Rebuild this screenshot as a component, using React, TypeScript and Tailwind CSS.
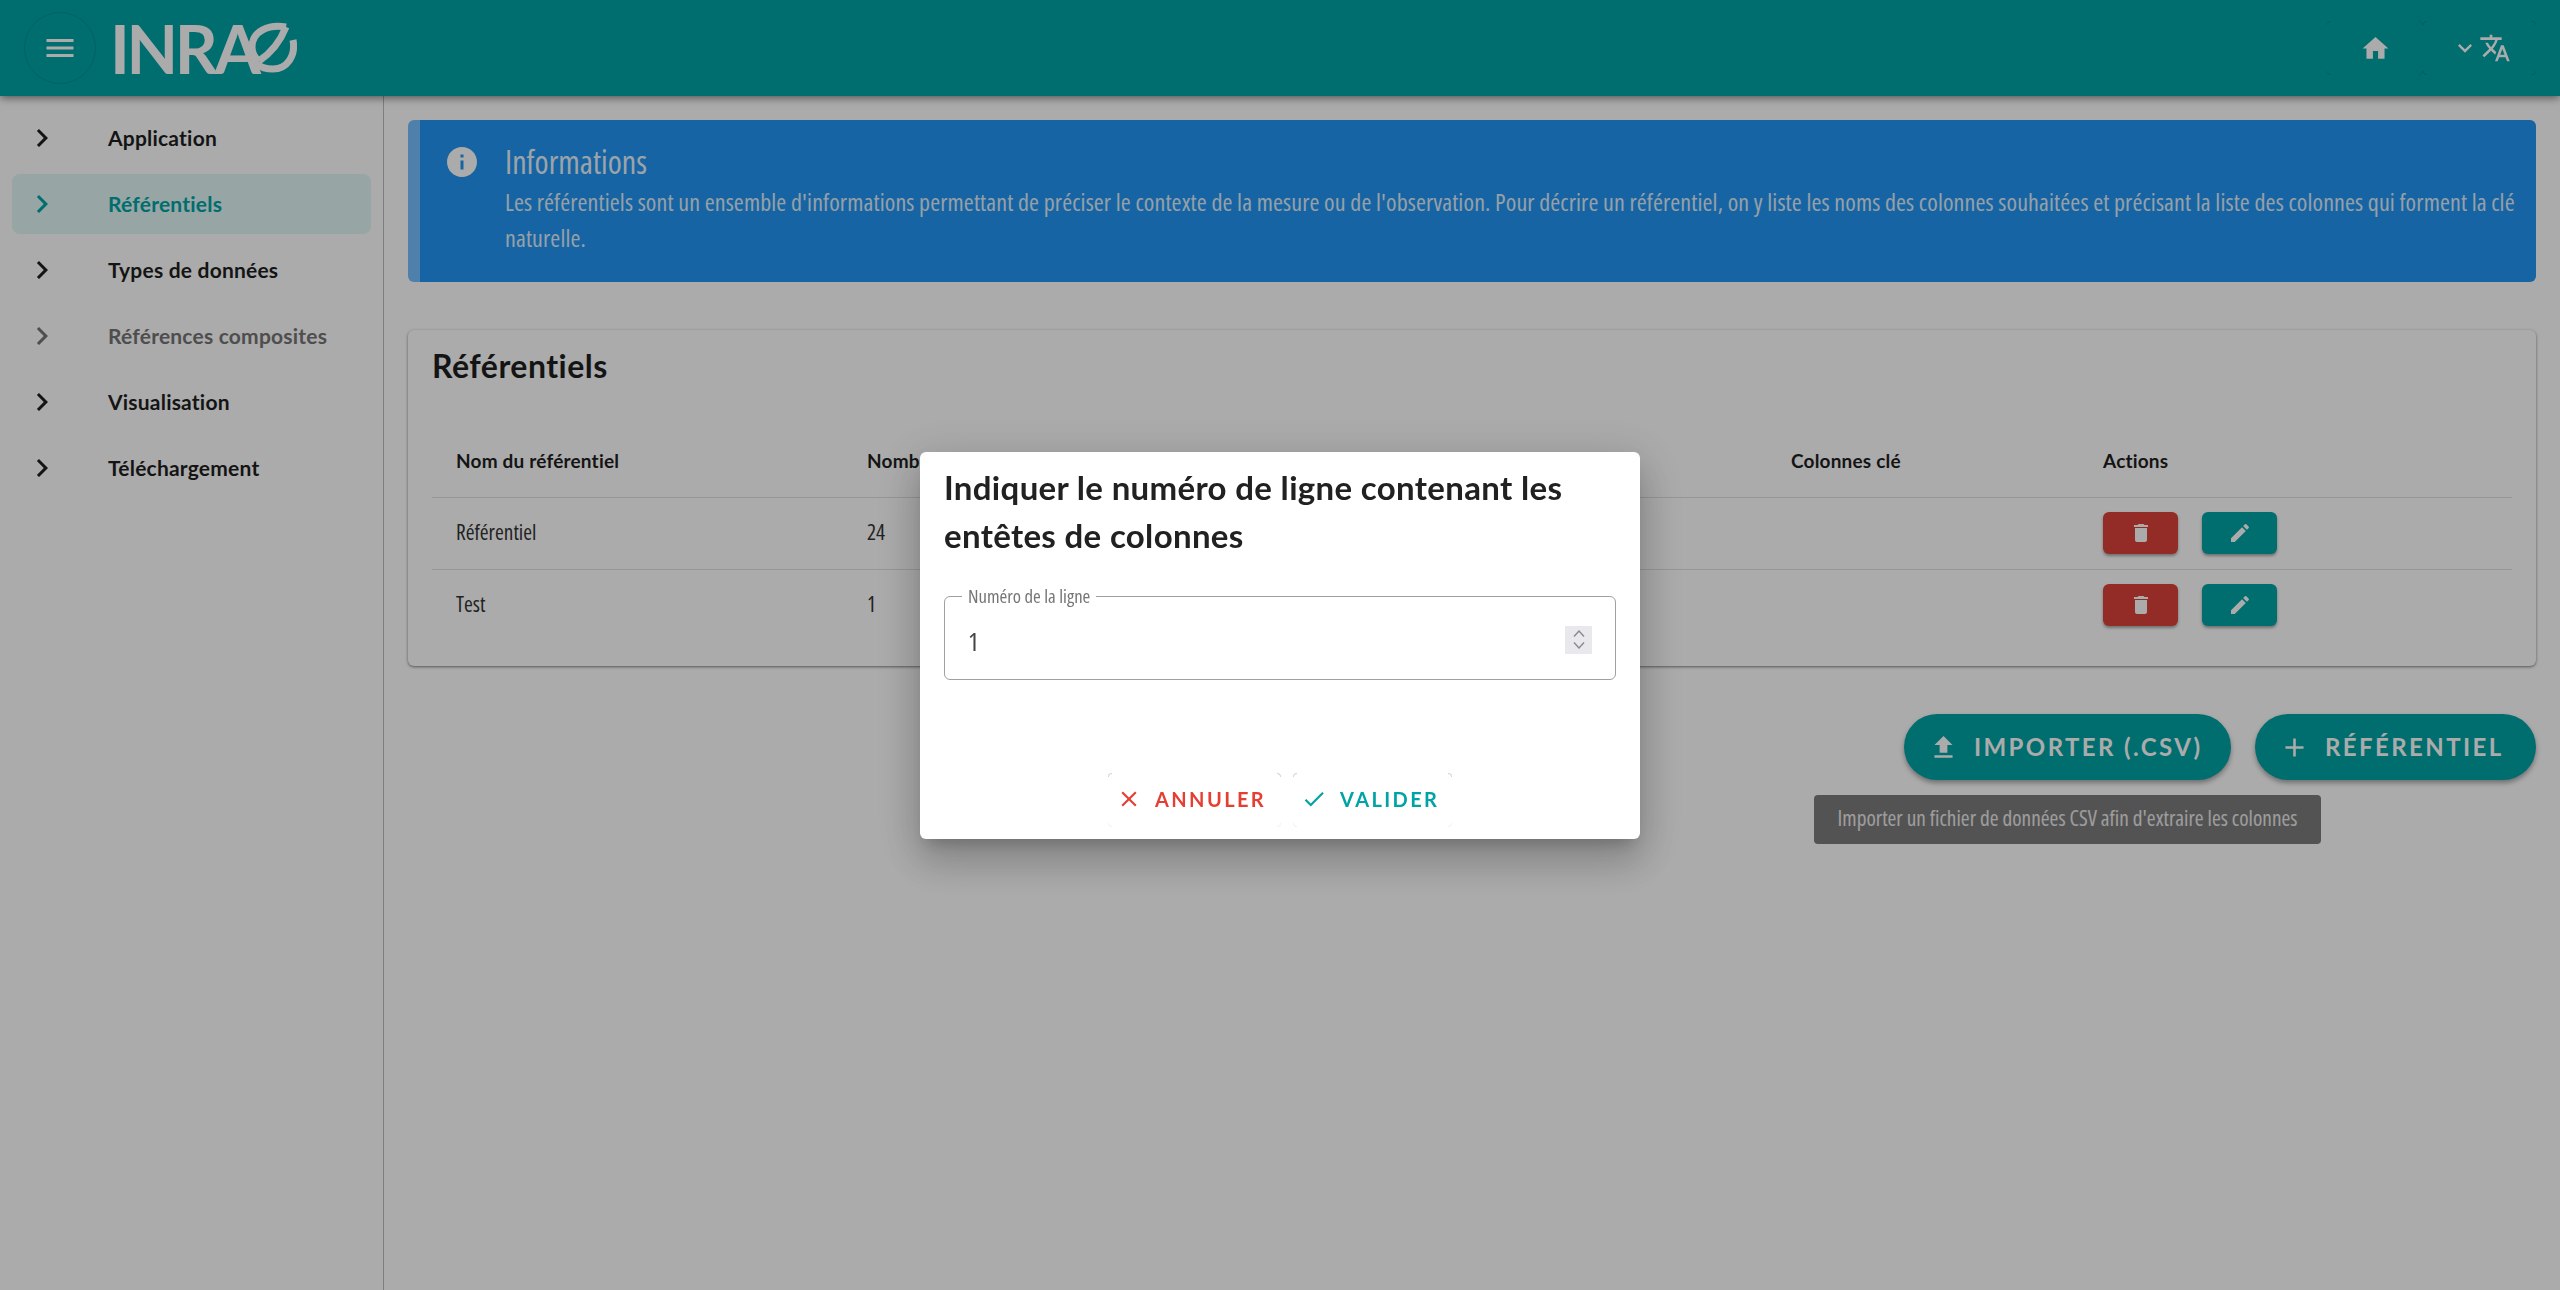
const menuPath = 'M3 18h18v-2H3v2zm0-5h18v-2H3v2zm0-7v2h18V6H3z';
const homePath = 'M10 20v-6h4v6h5v-8h3L12 3 2 12h3v8z';
const translatePath = 'M12.87 15.07l-2.54-2.51.03-.03c1.74-1.94 2.98-4.17 3.71-6.53H17V4h-7V2H8v2H1v1.99h11.17C11.5 7.92 10.44 9.75 9 11.35 8.07 10.32 7.3 9.19 6.69 8h-2c.73 1.63 1.73 3.17 2.98 4.56l-5.09 5.02L4 19l5-5 3.11 3.11.76-2.04zM18.5 10h-2L12 22h2l1.12-3h4.75L21 22h2l-4.5-12zm-2.62 7l1.62-4.33L19.12 17h-3.24z';
const chevronRight = 'M10 6 8.59 7.41 13.17 12l-4.58 4.59L10 18l6-6z';
const chevronDown = 'M16.59 8.59 12 13.17 7.41 8.59 6 10l6 6 6-6z';
const infoPath = 'M12 2C6.48 2 2 6.48 2 12s4.48 10 10 10 10-4.48 10-10S17.52 2 12 2zm1 15h-2v-6h2v6zm0-8h-2V7h2v2z';
const deletePath = 'M6 19c0 1.1.9 2 2 2h8c1.1 0 2-.9 2-2V7H6v12zM19 4h-3.5l-1-1h-5l-1 1H5v2h14V4z';
const editPath = 'M3 17.25V21h3.75L17.81 9.94l-3.75-3.75L3 17.25zM20.71 7.04c.39-.39.39-1.02 0-1.41l-2.34-2.34c-.39-.39-1.02-.39-1.41 0l-1.83 1.83 3.75 3.75 1.83-1.83z';
const uploadPath = 'M9 16h6v-6h4l-7-7-7 7h4zm-4 2h14v2H5z';
const plusPath = 'M19 13h-6v6h-2v-6H5v-2h6V5h2v6h6v2z';
const closePath = 'M19 6.41 17.59 5 12 10.59 6.41 5 5 6.41 10.59 12 5 17.59 6.41 19 12 13.41 17.59 19 19 17.59 13.41 12z';
const checkPath = 'M9 16.17 4.83 12l-1.42 1.41L9 19 21 7l-1.41-1.41z';

function Icon({ d, className }: { d: string; className: string }) {
  return (
    <svg viewBox="0 0 24 24" fill="currentColor" className={className}>
      <path d={d} />
    </svg>
  );
}

// faint rounded corners left by the button outlines
function Corners({ top, bottom }: { top: string; bottom: string }) {
  return (
    <>
      <span className={`absolute left-0 top-0 h-[4px] w-[4px] rounded-tl-[4px] border-l border-t ${top}`} />
      <span className={`absolute right-0 top-0 h-[4px] w-[4px] rounded-tr-[4px] border-r border-t ${top}`} />
      <span className={`absolute bottom-0 left-0 h-[4px] w-[4px] rounded-bl-[4px] border-b border-l ${bottom}`} />
      <span className={`absolute bottom-0 right-0 h-[4px] w-[4px] rounded-br-[4px] border-b border-r ${bottom}`} />
    </>
  );
}

function Logo() {
  return (
    <div className="relative ml-[14px] flex h-[48px] w-[188px] items-center text-white">
      <span className="[font-family:'Lato',sans-serif] text-[67px] font-bold leading-none tracking-[-0.05em] [font-stretch:normal]">INRA</span>
      <svg viewBox="0 0 50 52" fill="none" stroke="currentColor" strokeWidth="7" className="absolute left-[137px] top-[-2px] h-[52px] w-[50px]">
        <path d="M39 5 C22 2 5 9 5 25 C5 31 8 36 12 39" />
        <path d="M12 39 C24 31 33 20 39 5" />
        <path d="M46 18 C49 34 40 47 26 47 C19 47 13 45 8 41" />
      </svg>
    </div>
  );
}

const menuItems = [
  { label: 'Application' },
  { label: 'Référentiels', active: true },
  { label: 'Types de données' },
  { label: 'Références composites', disabled: true },
  { label: 'Visualisation' },
  { label: 'Téléchargement' },
];

function Sidebar() {
  return (
    <aside className="flex w-[384px] shrink-0 flex-col gap-[6px] border-r border-[#bdbdbd] px-[12px] pt-[12px] [font-family:'Lato',sans-serif] text-[21px] font-bold tracking-[0.01em]">
      {menuItems.map(({ label, active, disabled }) => (
        <div
          key={label}
          className={`flex h-[60px] items-center rounded-[8px] ${active ? 'bg-[#e1f6f6] text-[#00a3a6]' : disabled ? 'text-[#757575]' : 'text-[#1f1f1f]'}`}
        >
          <Icon d={chevronRight} className="ml-[12px] mr-[48px] h-[36px] w-[36px] shrink-0" />
          {label}
        </div>
      ))}
    </aside>
  );
}

function Alert() {
  return (
    <div className="flex h-[162px] rounded-[6px] border-l-[12px] border-[#76bfff] bg-[#2196f3] pl-[27px] pr-[16px] pt-[24px] text-white">
      <Icon d={infoPath} className="mr-[22px] h-[36px] w-[36px] shrink-0 -translate-x-[3px]" />
      <div>
        <p className="text-[32px] leading-[36px] opacity-90">Informations</p>
        <p className="mt-[4px] text-[24px] leading-[36px] tracking-[0.005em] opacity-85">
          Les référentiels sont un ensemble d'informations permettant de préciser le contexte de la mesure ou de l'observation. Pour décrire un référentiel, on y liste les noms des colonnes souhaitées et précisant la liste des colonnes qui forment la clé naturelle.
        </p>
      </div>
    </div>
  );
}

const rows = [
  { name: 'Référentiel', count: '24' },
  { name: 'Test', count: '1' },
];

function RefTable() {
  return (
    <div className="mt-[48px] h-[336px] rounded-[6px] bg-white px-[24px] pt-[17px] shadow-[0_1px_3px_rgba(0,0,0,0.5)]">
      <h2 className="[font-family:'Lato',sans-serif] text-[32px] font-bold leading-[38px] tracking-[0.015em] text-[#1f1f1f] [font-stretch:normal]">Référentiels</h2>
      <table className="mt-[41px] w-full table-fixed text-left">
        <colgroup>
          <col className="w-[411px]" />
          <col className="w-[924px]" />
          <col className="w-[312px]" />
          <col />
        </colgroup>
        <thead>
          <tr className="h-[71px] border-b border-[#e0e0e0] [font-family:'Lato',sans-serif] text-[19px] font-bold tracking-[0.01em] text-[#1f1f1f]">
            <th className="pl-[24px] font-bold">Nom du référentiel</th>
            <th className="pl-[24px] font-bold">Nombre de lignes</th>
            <th className="pl-[24px] font-bold">Colonnes clé</th>
            <th className="pl-[24px] font-bold">Actions</th>
          </tr>
        </thead>
        <tbody className="text-[21.3px] text-[#333]">
          {rows.map(({ name, count }, i) => (
            <tr key={name} className={`h-[72px] ${i === 0 ? 'border-b border-[#e0e0e0]' : ''}`}>
              <td className="pb-[3px] pl-[24px]">{name}</td>
              <td className="pb-[3px] pl-[24px]">{count}</td>
              <td />
              <td className="pl-[24px]">
                <div className="flex gap-[24px]">
                  <button className="flex h-[42px] w-[75px] items-center justify-center rounded-[6px] bg-[#db423a] text-white shadow-[0_2px_3px_rgba(0,0,0,0.35)]">
                    <Icon d={deletePath} className="h-[24px] w-[24px]" />
                  </button>
                  <button className="flex h-[42px] w-[75px] items-center justify-center rounded-[6px] bg-[#00a3a6] text-white shadow-[0_2px_3px_rgba(0,0,0,0.35)]">
                    <Icon d={editPath} className="h-[24px] w-[24px]" />
                  </button>
                </div>
              </td>
            </tr>
          ))}
        </tbody>
      </table>
    </div>
  );
}

function PageActions() {
  return (
    <div className="relative mt-[48px] flex justify-end gap-[24px] [font-family:'Lato',sans-serif] text-[24px] font-bold tracking-[0.1em] text-white">
      <button className="flex h-[66px] w-[327px] items-center rounded-full bg-[#00a3a6] pl-[24px] uppercase shadow-[0_3px_5px_rgba(0,0,0,0.35)]">
        <Icon d={uploadPath} className="mr-[15px] h-[31px] w-[31px]" />
        Importer (.csv)
      </button>
      <button className="flex h-[66px] w-[281px] items-center rounded-full bg-[#00a3a6] pl-[24px] uppercase shadow-[0_3px_5px_rgba(0,0,0,0.35)]">
        <Icon d={plusPath} className="mr-[15px] h-[31px] w-[31px]" />
        Référentiel
      </button>
      <div className="absolute right-[215px] top-[81px] flex h-[49px] w-[507px] items-center justify-center whitespace-nowrap rounded-[4px] bg-[#7c7c7c] pb-[4px] [font-family:'Open_Sans',sans-serif] text-[21.3px] font-normal tracking-normal text-white/85 [font-stretch:75%]">
        Importer un fichier de données CSV afin d'extraire les colonnes
      </div>
    </div>
  );
}

function Modal() {
  return (
    <div className="fixed inset-0 z-10 flex items-center justify-center bg-black/33">
      <div className="flex h-[387px] w-[720px] flex-col rounded-[6px] bg-white px-[24px] shadow-[0_11px_15px_-7px_rgba(0,0,0,0.2),0_24px_38px_3px_rgba(0,0,0,0.14),0_9px_46px_8px_rgba(0,0,0,0.12)]">
        <h2 className="pt-[11px] [font-family:'Lato',sans-serif] text-[33px] font-bold leading-[48px] tracking-[0.01em] text-[#212121] [font-stretch:normal]">
          Indiquer le numéro de ligne contenant les entêtes de colonnes
        </h2>
        <fieldset className="mt-[28px] h-[93px] rounded-[6px] border border-[#a0a0a0] pl-[17px] pr-[23px]">
          <legend className="px-[6px] pb-[2px] text-[18.7px] leading-[18px] text-[#757575]">Numéro de la ligne</legend>
          <div className="mt-[18px] flex items-center justify-between">
            <input readOnly type="text" value="1" className="w-[100px] pl-[6px] text-[26px] leading-[32px] text-[#444] outline-none" />
            <div className="-mt-[2px] flex h-[28px] w-[27px] flex-col items-center justify-center gap-[5px] bg-[#e9e9ed] text-[#8a8a8a]">
              <svg viewBox="0 0 12 7" fill="none" stroke="currentColor" strokeWidth="1.4" className="h-[7px] w-[12px]">
                <path d="M1 6.5 6 1l5 5.5" />
              </svg>
              <svg viewBox="0 0 12 7" fill="none" stroke="currentColor" strokeWidth="1.4" className="h-[7px] w-[12px]">
                <path d="M1 .5 6 6l5-5.5" />
              </svg>
            </div>
          </div>
        </fieldset>
        <div className="mt-auto mb-[12px] flex justify-center gap-[12px] [font-family:'Lato',sans-serif] text-[20px] font-bold tracking-[0.12em]">
          <button className="relative flex h-[54px] w-[173px] items-center rounded-[8px] pb-[2px] pl-[8px] uppercase text-[#e53f33]">
            <Corners top="border-[#d4d4d4]" bottom="border-[#f2f2f2]" />
            <Icon d={closePath} className="mr-[13px] h-[26px] w-[26px]" />
            Annuler
          </button>
          <button className="relative flex h-[54px] w-[159px] items-center rounded-[8px] pb-[2px] pl-[8px] uppercase text-[#00a3a6]">
            <Corners top="border-[#d4d4d4]" bottom="border-[#f2f2f2]" />
            <Icon d={checkPath} className="mr-[13px] h-[26px] w-[26px]" />
            Valider
          </button>
        </div>
      </div>
    </div>
  );
}

export default function App() {
  return (
    <div className="flex h-[1290px] flex-col overflow-hidden bg-white [font-family:'Open_Sans',sans-serif] [font-stretch:75%]">
      <header className="relative z-[1] flex h-[96px] shrink-0 items-center bg-[#00a3a6] text-white shadow-[0_2px_8px_rgba(0,0,0,0.5)]">
        <button className="ml-[24px] flex h-[72px] w-[72px] items-center justify-center rounded-full border border-black/10">
          <Icon d={menuPath} className="h-[36px] w-[36px]" />
        </button>
        <Logo />
        <div className="ml-auto mr-[24px] flex items-center">
          <button className="relative flex h-[54px] w-[96px] items-center justify-center">
            <Corners top="border-black/10" bottom="border-black/10" />
            <Icon d={homePath} className="h-[31px] w-[31px]" />
          </button>
          <button className="relative flex h-[54px] w-[113px] items-center pl-[28px]">
            <Corners top="border-black/10" bottom="border-black/10" />
            <Icon d={chevronDown} className="h-[28px] w-[28px]" />
            <Icon d={translatePath} className="h-[32px] w-[32px]" />
          </button>
        </div>
      </header>
      <div className="flex min-h-0 flex-1">
        <Sidebar />
        <main className="min-w-0 flex-1 px-[24px] pt-[24px]">
          <Alert />
          <RefTable />
          <PageActions />
        </main>
      </div>
      <Modal />
    </div>
  );
}
